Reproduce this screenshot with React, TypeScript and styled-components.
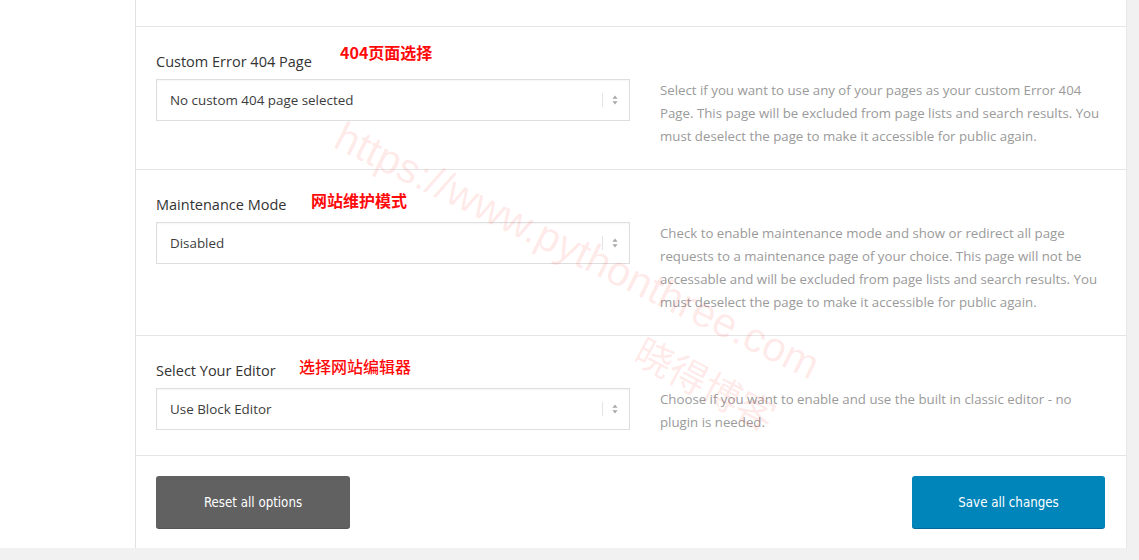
import React from "react";
import styled, { createGlobalStyle } from "styled-components";

const Global = createGlobalStyle`
  html, body { margin: 0; padding: 0; }
  body {
    background: #f1f1f1;
    font-family: "Open Sans", "Noto Sans", "Noto Sans CJK SC", sans-serif;
    -webkit-font-smoothing: antialiased;
  }
`;

const Page = styled.div`
  position: relative;
  display: flex;
  height: 548px;
  overflow: hidden;
`;

const SideBlank = styled.div`
  width: 135px;
  flex: none;
  background: #ffffff;
`;

const Panel = styled.main`
  flex: 1;
  display: flex;
  flex-direction: column;
  background: #ffffff;
  border-left: 1px solid #e1e1e1;
  border-right: 1px solid #e8e8e8;
`;

const RightGutter = styled.div`
  width: 12px;
  flex: none;
  background: #f1f1f1;
`;

const TopRest = styled.div`
  height: 26px;
  border-bottom: 1px solid #e5e5e5;
`;

const Row = styled.section`
  display: grid;
  grid-template-columns: 474px 1fr;
  column-gap: 30px;
  padding: 23px 20px 21px 20px;
  border-bottom: 1px solid #e5e5e5;
`;

const Field = styled.div`
  display: flex;
  flex-direction: column;
`;

const LabelLine = styled.div`
  position: relative;
  height: 20px;
  margin-bottom: 9px;
`;

const Label = styled.label`
  font-size: 14.5px;
  line-height: 20px;
  color: #333333;
`;

const Annotation = styled.span<{ $left: number; $top: number; $bold?: boolean }>`
  position: absolute;
  left: ${(p) => p.$left}px;
  top: ${(p) => p.$top}px;
  font-family: "Noto Sans CJK SC", "Microsoft YaHei", sans-serif;
  font-size: 16px;
  line-height: 20px;
  font-weight: ${(p) => (p.$bold ? 700 : 500)};
  color: #ff0a0a;
  white-space: nowrap;
`;

const SelectBox = styled.div`
  position: relative;
  height: 40px;
  border: 1px solid #dedede;
  box-shadow: inset 0 1px 2px rgba(0, 0, 0, 0.04);
  display: flex;
  align-items: center;
  padding: 0 14px 0 13px;
  font-size: 13.4px;
  color: #3c3c3c;
  background: #ffffff;
`;

const SelectValue = styled.span`
  flex: 1;
`;

const ArrowArea = styled.span`
  display: flex;
  align-items: center;
  gap: 9px;
  margin-right: -3px;
`;

const ArrowDivider = styled.span`
  width: 1px;
  height: 14px;
  background: #e4e4e4;
`;

const Desc = styled.div`
  padding-top: 29px;
  font-size: 13.25px;
  line-height: 23px;
  color: #9a9a9a;
`;

const DescLine = styled.div`
  white-space: nowrap;
`;

const Footer = styled.footer`
  display: flex;
  justify-content: space-between;
  padding: 20px 21px 20px 20px;
`;

const Button = styled.button<{ $variant: "reset" | "save" }>`
  width: ${(p) => (p.$variant === "reset" ? 194 : 193)}px;
  height: 52px;
  border: none;
  border-radius: 3px;
  background: ${(p) => (p.$variant === "reset" ? "#616161" : "#0085ba")};
  box-shadow: ${(p) => (p.$variant === "reset" ? "0 1px 0 #555" : "0 1px 0 #006799")};
  color: #ffffff;
  font-family: "DejaVu Sans Condensed", "Liberation Sans", sans-serif;
  font-size: 13.2px;
  cursor: pointer;
  padding: 0;
`;

const Watermark = styled.span<{ $left: number; $top: number; $size: number; $angle: number; $cjk?: boolean }>`
  position: absolute;
  left: ${(p) => p.$left}px;
  top: ${(p) => p.$top}px;
  font-family: ${(p) => (p.$cjk ? `"Noto Sans CJK SC", sans-serif` : `"Liberation Sans", Arial, sans-serif`)};
  font-size: ${(p) => p.$size}px;
  line-height: 1;
  color: rgba(255, 40, 40, 0.1);
  transform: rotate(${(p) => p.$angle}deg);
  transform-origin: 0 0;
  white-space: nowrap;
  pointer-events: none;
`;

const UpDown = () => (
  <svg width="6" height="10" viewBox="0 0 6 10" aria-hidden>
    <path d="M3 0.5 L5.6 3.8 H0.4 Z" fill="#a8a8a8" />
    <path d="M3 9.5 L5.6 6.2 H0.4 Z" fill="#a8a8a8" />
  </svg>
);

type Opt = {
  label: string;
  note: string;
  noteLeft: number;
  noteTop: number;
  bold?: boolean;
  value: string;
  desc: string[];
};

const options: Opt[] = [
  {
    label: "Custom Error 404 Page",
    note: "404页面选择",
    noteLeft: 184,
    noteTop: -8,
    bold: true,
    value: "No custom 404 page selected",
    desc: [
      "Select if you want to use any of your pages as your custom Error 404",
      "Page. This page will be excluded from page lists and search results. You",
      "must deselect the page to make it accessible for public again.",
    ],
  },
  {
    label: "Maintenance Mode",
    note: "网站维护模式",
    noteLeft: 155,
    noteTop: -3,
    bold: true,
    value: "Disabled",
    desc: [
      "Check to enable maintenance mode and show or redirect all page",
      "requests to a maintenance page of your choice. This page will not be",
      "accessable and will be excluded from page lists and search results. You",
      "must deselect the page to make it accessible for public again.",
    ],
  },
  {
    label: "Select Your Editor",
    note: "选择网站编辑器",
    noteLeft: 143,
    noteTop: -3,
    value: "Use Block Editor",
    desc: [
      "Choose if you want to enable and use the built in classic editor - no",
      "plugin is needed.",
    ],
  },
];

export default function App() {
  return (
    <>
      <Global />
      <Page>
        <SideBlank />
        <Panel>
          <TopRest />
          {options.map((o) => (
            <Row key={o.label}>
              <Field>
                <LabelLine>
                  <Label>{o.label}</Label>
                  <Annotation $left={o.noteLeft} $top={o.noteTop} $bold={o.bold}>
                    {o.note}
                  </Annotation>
                </LabelLine>
                <SelectBox>
                  <SelectValue>{o.value}</SelectValue>
                  <ArrowArea>
                    <ArrowDivider />
                    <UpDown />
                  </ArrowArea>
                </SelectBox>
              </Field>
              <Desc>
                {o.desc.map((l) => (
                  <DescLine key={l}>{l}</DescLine>
                ))}
              </Desc>
            </Row>
          ))}
          <Footer>
            <Button $variant="reset">Reset all options</Button>
            <Button $variant="save">Save all changes</Button>
          </Footer>
        </Panel>
        <RightGutter />
        <Watermark $left={347} $top={115} $size={41.5} $angle={26}>
          https://www.pythonthree.com
        </Watermark>
        <Watermark $left={648} $top={330} $size={38} $angle={28} $cjk>
          晓得博客
        </Watermark>
      </Page>
    </>
  );
}
